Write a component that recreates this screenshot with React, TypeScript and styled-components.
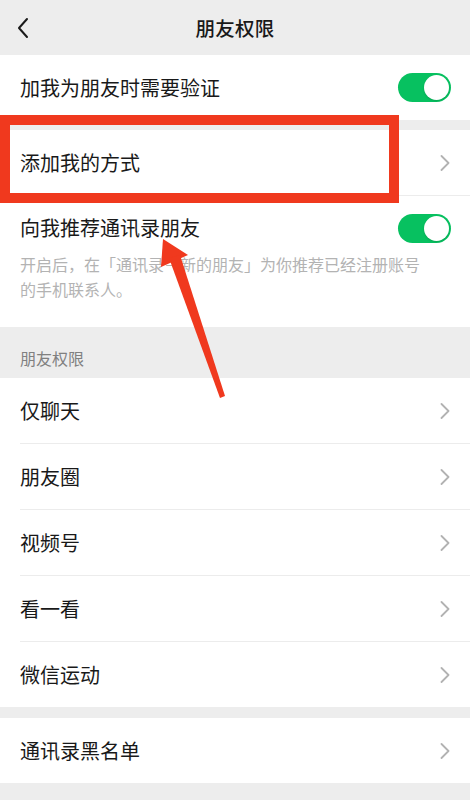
import React from "react";
import styled, { createGlobalStyle } from "styled-components";

const Global = createGlobalStyle`
  html, body { margin: 0; padding: 0; background: #ededed; }
  body { font-family: "Noto Sans CJK SC", "Noto Sans", sans-serif; -webkit-font-smoothing: antialiased; }
  * { box-sizing: border-box; }
`;

const Page = styled.div`
  position: relative;
  width: 470px;
  min-height: 800px;
  background: #ededed;
  overflow: hidden;
`;

const Header = styled.div`
  height: 55px;
  display: flex;
  align-items: center;
  justify-content: center;
  position: relative;
  background: #ededed;
`;

const BackButton = styled.div`
  position: absolute;
  left: 15px;
  top: 16px;
  width: 16px;
  height: 24px;
  display: flex;
  align-items: center;
  justify-content: center;
`;

const Title = styled.div`
  font-size: 19.5px;
  font-weight: 500;
  color: #191919;
  letter-spacing: 0.3px;
`;

const Section = styled.div<{ $gapTop?: number }>`
  background: #fff;
  margin-top: ${(p) => p.$gapTop ?? 0}px;
`;

const Row = styled.div`
  height: 65px;
  display: flex;
  align-items: center;
  justify-content: space-between;
  padding: 0 20px 0 20px;
`;

const RowLabel = styled.div`
  font-size: 20px;
  color: #191919;
  line-height: 28px;
`;

const Divider = styled.div`
  height: 1px;
  margin-left: 20px;
  background: #ececec;
`;

const TallRow = styled.div`
  padding: 18px 20px 25px 20px;
`;

const TallTop = styled.div`
  display: flex;
  align-items: center;
  justify-content: space-between;
  height: 28px;
`;

const Desc = styled.div`
  margin-top: 10px;
  font-size: 16px;
  line-height: 25px;
  color: #b3b3b3;
  white-space: nowrap;
`;

const GroupHeader = styled.div`
  height: 51px;
  padding: 20px 20px 0 20px;
  font-size: 16px;
  line-height: 22px;
  color: #808080;
`;

const SwitchTrack = styled.div`
  width: 53px;
  height: 29px;
  border-radius: 15px;
  background: #07c160;
  position: relative;
  margin-right: -1px;
`;

const SwitchKnob = styled.div`
  position: absolute;
  right: 2px;
  top: 2px;
  width: 25px;
  height: 25px;
  border-radius: 50%;
  background: #fff;
  box-shadow: 0 1px 2px rgba(0, 0, 0, 0.15);
`;

const Highlight = styled.div`
  position: absolute;
  left: 0;
  top: 115px;
  width: 399px;
  height: 88px;
  border: 10px solid #f0391e;
  pointer-events: none;
`;

const ArrowWrap = styled.svg`
  position: absolute;
  left: 150px;
  top: 230px;
  pointer-events: none;
`;

const Switch = () => (
  <SwitchTrack>
    <SwitchKnob />
  </SwitchTrack>
);

const Chevron = () => (
  <svg width="10" height="16" viewBox="0 0 10 16">
    <path d="M1.5 1 L8.5 8 L1.5 15" fill="none" stroke="#b2b2b2" strokeWidth="1.8" strokeLinecap="round" strokeLinejoin="round" />
  </svg>
);

const NavRow = ({ label }: { label: string }) => (
  <Row>
    <RowLabel>{label}</RowLabel>
    <Chevron />
  </Row>
);

export default function App() {
  const perms = ["仅聊天", "朋友圈", "视频号", "看一看", "微信运动"];
  return (
    <Page>
      <Global />
      <Header>
        <BackButton>
          <svg width="14" height="22" viewBox="0 0 14 22">
            <path d="M11 2 L3 11 L11 20" fill="none" stroke="#1a1a1a" strokeWidth="2" strokeLinecap="round" strokeLinejoin="round" />
          </svg>
        </BackButton>
        <Title>朋友权限</Title>
      </Header>

      <Section>
        <Row>
          <RowLabel>加我为朋友时需要验证</RowLabel>
          <Switch />
        </Row>
      </Section>

      <Section $gapTop={10}>
        <NavRow label="添加我的方式" />
        <Divider />
        <TallRow>
          <TallTop>
            <RowLabel>向我推荐通讯录朋友</RowLabel>
            <Switch />
          </TallTop>
          <Desc>
            开启后，在「通讯录－新的朋友」为你推荐已经注册账号
            <br />
            的手机联系人。
          </Desc>
        </TallRow>
      </Section>

      <GroupHeader>朋友权限</GroupHeader>
      <Section>
        {perms.map((p, i) => (
          <React.Fragment key={p}>
            {i > 0 && <Divider />}
            <NavRow label={p} />
          </React.Fragment>
        ))}
      </Section>

      <Section $gapTop={11}>
        <NavRow label="通讯录黑名单" />
      </Section>

      <Highlight />
      <ArrowWrap width="90" height="180" viewBox="0 0 90 180">
        <polygon points="13,9 11,37 38,25" fill="#f0391e" />
        <polygon points="19,28 30,25 75,166 70,168" fill="#f0391e" />
      </ArrowWrap>
    </Page>
  );
}
